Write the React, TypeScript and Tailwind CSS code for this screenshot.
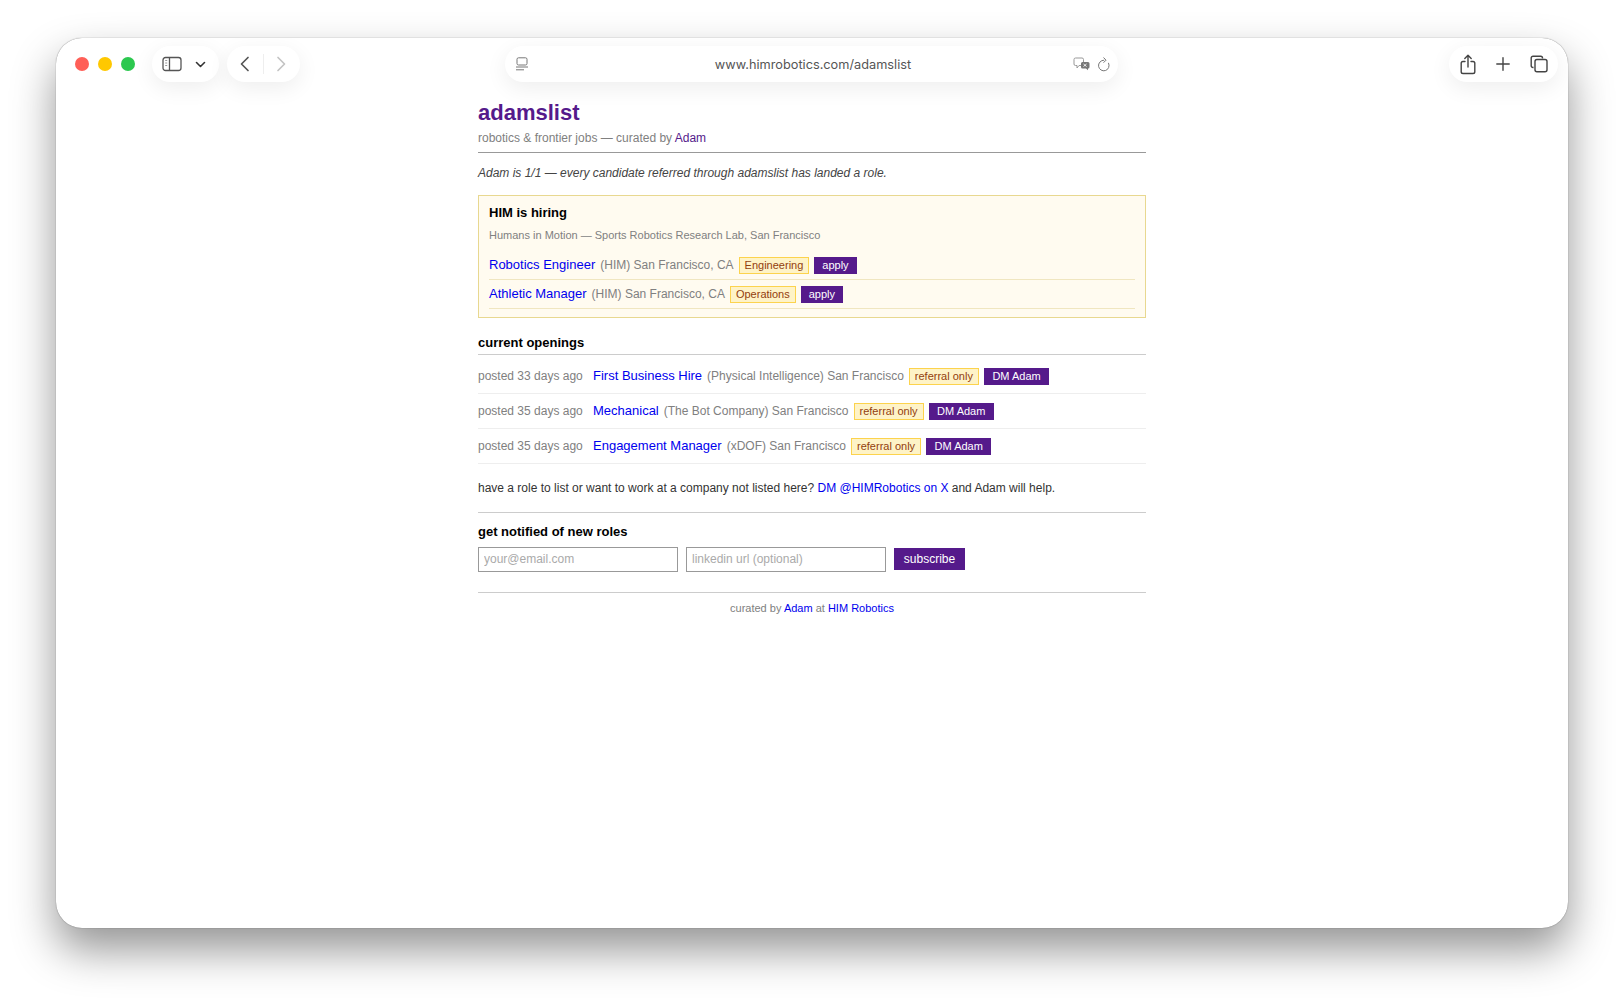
import React from 'react';

const pill = 'h-9 rounded-[18px] bg-white shadow-[0_6px_22px_rgba(0,0,0,0.07)] flex items-center shrink-0';
const badge = 'inline-block border border-[#fcd34d] bg-[#fef3c7] text-[#92400e] text-[11px] leading-[13px] px-[5px] py-[1px] mx-[5px]';
const action = 'inline-block bg-[#551a8b] text-white text-[11px] leading-[13px] py-[2px]';

function Toolbar() {
  return (
    <div className="flex items-center h-9 mt-2 pl-[19px] pr-[10px]">
      <div className="flex gap-[9px]">
        <span className="w-[14px] h-[14px] rounded-full bg-[#ff5f57]" />
        <span className="w-[14px] h-[14px] rounded-full bg-[#ffc800]" />
        <span className="w-[14px] h-[14px] rounded-full bg-[#2cc84f]" />
      </div>
      <div className={`${pill} w-[67px] ml-[17px] pl-[10px] gap-[13px]`}>
        <svg width="20" height="16" viewBox="0 0 20 16" fill="none" stroke="#555" strokeWidth="1.3">
          <rect x="1" y="1.5" width="18" height="13" rx="2.5" />
          <path d="M7.500 1.500v13" />
          <path d="M3.200 4.500h2M3.200 7h2M3.200 9.500h2" strokeWidth="1.1" stroke="#999" />
        </svg>
        <svg width="11" height="7" viewBox="0 0 11 7" fill="none" stroke="#333" strokeWidth="1.6" strokeLinecap="round" strokeLinejoin="round">
          <path d="M1.500 1.500 5.500 5.500 9.500 1.500" />
        </svg>
      </div>
      <div className={`${pill} w-[73px] ml-2 pl-[13px]`}>
        <svg width="10" height="16" viewBox="0 0 10 16" fill="none" stroke="#555" strokeWidth="1.7" strokeLinecap="round" strokeLinejoin="round">
          <path d="M8 1.500 1.500 8 8 14.500" />
        </svg>
        <span className="w-px h-5 bg-[#eeeeee] ml-[13px]" />
        <svg className="ml-[12px]" width="10" height="16" viewBox="0 0 10 16" fill="none" stroke="#c4c4c4" strokeWidth="1.7" strokeLinecap="round" strokeLinejoin="round">
          <path d="M2 1.500 8.500 8 2 14.500" />
        </svg>
      </div>
      <div className={`${pill} w-[613px] ml-[205px] pl-[10px] pr-[7px]`}>
        <div className="w-[60px]">
          <svg width="14" height="14" viewBox="0 0 14 14" fill="none" stroke="#777" strokeWidth="1">
            <rect x="2" y="0.800" width="10" height="7.200" rx="1.500" />
            <path d="M1 10h12M1 12.800h8" />
          </svg>
        </div>
        <span className="flex-1 text-center font-['Inter',sans-serif] text-[12.75px] text-[#555555] mt-px">www.himrobotics.com/adamslist</span>
        <div className="w-[60px] flex items-center justify-end gap-[6px]">
          <svg width="18" height="14" viewBox="0 0 18 14">
            <path d="M2.500 1h6.500a1.500 1.500 0 0 1 1.500 1.500V7a1.500 1.500 0 0 1-1.500 1.500H6L4 11V8.500H2.500A1.500 1.500 0 0 1 1 7V2.500A1.500 1.500 0 0 1 2.500 1Z" fill="none" stroke="#999" strokeWidth="1" />
            <path d="M9.500 5h5.500a1.500 1.500 0 0 1 1.500 1.500v3.500a1.500 1.500 0 0 1-1.500 1.500H15v1.800l-2-1.800H9.500A1.500 1.500 0 0 1 8 10V6.500A1.500 1.500 0 0 1 9.500 5Z" fill="#777" />
            <path d="M10.500 7l3 2.500M13.500 7l-3 2.500" stroke="#fff" strokeWidth="0.9" />
          </svg>
          <svg width="14" height="15" viewBox="0 0 14 15" fill="none" stroke="#777" strokeWidth="1" strokeLinecap="round" strokeLinejoin="round">
            <path d="M11.600 6.200A5.300 5.300 0 1 1 6.800 3.200" />
            <path d="M6.800 0.800 9 3.200 6.800 5.400" />
          </svg>
        </div>
      </div>
      <div className={`${pill} w-[109px] ml-auto pl-[11px] gap-[20px]`}>
        <svg width="16" height="21" viewBox="0 0 16 21" fill="none" stroke="#444" strokeWidth="1.4" strokeLinecap="round" strokeLinejoin="round">
          <path d="M5 7.500H3a1.800 1.800 0 0 0-1.800 1.800v8.400A1.800 1.800 0 0 0 3 19.500h10a1.800 1.800 0 0 0 1.800-1.800V9.300A1.800 1.800 0 0 0 13 7.500h-2" />
          <path d="M8 13V1.500M4.800 4.500 8 1.300l3.200 3.200" />
        </svg>
        <svg width="14" height="14" viewBox="0 0 14 14" fill="none" stroke="#444" strokeWidth="1.4" strokeLinecap="round">
          <path d="M7 .8v12.400M.8 7h12.400" />
        </svg>
        <svg width="18" height="18" viewBox="0 0 18 18" fill="none" stroke="#444" strokeWidth="1.4">
          <path d="M3.500 12.500H3A1.800 1.800 0 0 1 1.200 10.700V3A1.800 1.800 0 0 1 3 1.200h7.700A1.800 1.800 0 0 1 12.500 3v.5" />
          <rect x="5" y="4.500" width="12" height="12.300" rx="2" />
        </svg>
      </div>
    </div>
  );
}

function HimRow({ title, loc, tag }: { title: string; loc: string; tag: string }) {
  return (
    <div className="h-[29px] flex items-center border-b border-[#f0e6c0]">
      <a className="text-[13px] text-[#0000ee]">{title}</a>
      <span className="text-[12px] text-[#808080] ml-[5px]">{loc}</span>
      <span className={badge}>{tag}</span>
      <span className={`${action} px-[8px]`}>apply</span>
    </div>
  );
}

function JobRow({ posted, title, loc }: { posted: string; title: string; loc: string }) {
  return (
    <div className="h-[35px] flex items-center border-b border-[#eeeeee]">
      <span className="text-[12px] text-[#808080] w-[115px]">{posted}</span>
      <a className="text-[13px] text-[#0000ee]">{title}</a>
      <span className="text-[12px] text-[#808080] ml-[5px]">{loc}</span>
      <span className={badge}>referral only</span>
      <span className={`${action} px-[8.5px]`}>DM Adam</span>
    </div>
  );
}

export default function App() {
  return (
    <div className="w-[1624px] h-[1002px] bg-white pl-[56px] pr-[56px] pt-[38px] font-['Liberation_Sans',Arial,sans-serif] overflow-hidden">
      <div className="h-[890px] rounded-[26px] bg-white shadow-[0_0_1px_rgba(0,0,0,0.6),0_22px_44px_rgba(0,0,0,0.42)] overflow-hidden">
        <Toolbar />
        <main className="w-[668px] mx-auto mt-[17px]">
          <h1 className="text-[22px] leading-[28px] font-bold text-[#551a8b]">adamslist</h1>
          <p className="text-[12px] leading-[14px] mt-[4px] text-[#808080]">
            robotics &amp; frontier jobs — curated by <a className="text-[#551a8b]">Adam</a>
          </p>
          <div className="border-b border-[#999999] mt-[7px]" />
          <p className="text-[12px] leading-[14px] italic text-[#444444] mt-[13px]">
            Adam is 1/1 — every candidate referred through adamslist has landed a role.
          </p>
          <section className="border border-[#e8d890] bg-[#fffbf0] mt-[15px] px-[10px] pt-[9px] pb-[8px]">
            <h2 className="text-[13px] leading-[16px] font-bold text-black">HIM is hiring</h2>
            <p className="text-[11px] leading-[13px] text-[#808080] mt-[8px] mb-[9px]">Humans in Motion — Sports Robotics Research Lab, San Francisco</p>
            <HimRow title="Robotics Engineer" loc="(HIM) San Francisco, CA" tag="Engineering" />
            <HimRow title="Athletic Manager" loc="(HIM) San Francisco, CA" tag="Operations" />
          </section>
          <h2 className="text-[13px] leading-[16px] font-bold text-black mt-[17px] pb-[3px] border-b border-[#cccccc]">current openings</h2>
          <div className="mt-[4px]">
            <JobRow posted="posted 33 days ago" title="First Business Hire" loc="(Physical Intelligence) San Francisco" />
            <JobRow posted="posted 35 days ago" title="Mechanical" loc="(The Bot Company) San Francisco" />
            <JobRow posted="posted 35 days ago" title="Engagement Manager" loc="(xDOF) San Francisco" />
          </div>
          <p className="text-[12px] leading-[14px] text-[#333333] mt-[17px]">
            have a role to list or want to work at a company not listed here? <a className="text-[#0000ee]">DM @HIMRobotics on X</a> and Adam will help.
          </p>
          <div className="border-b border-[#cccccc] mt-[17px]" />
          <h2 className="text-[13px] leading-[16px] font-bold text-black mt-[11px]">get notified of new roles</h2>
          <form className="flex items-start gap-2 mt-[7px]">
            <input readOnly placeholder="your@email.com" className="w-[200px] h-[25px] border border-[#999999] px-[5px] pb-[2px] text-[12px] placeholder:text-[#aaaaaa] outline-none" />
            <input readOnly placeholder="linkedin url (optional)" className="w-[200px] h-[25px] border border-[#999999] px-[5px] pb-[2px] text-[12px] placeholder:text-[#aaaaaa] outline-none" />
            <button type="button" className="w-[71px] h-[22px] mt-px bg-[#551a8b] text-white text-[12px]">subscribe</button>
          </form>
          <div className="border-b border-[#cccccc] mt-[20px]" />
          <p className="text-[11px] leading-[13px] text-center text-[#808080] mt-[9px]">
            curated by <a className="text-[#0000ee]">Adam</a> at <a className="text-[#0000ee]">HIM Robotics</a>
          </p>
        </main>
      </div>
    </div>
  );
}
